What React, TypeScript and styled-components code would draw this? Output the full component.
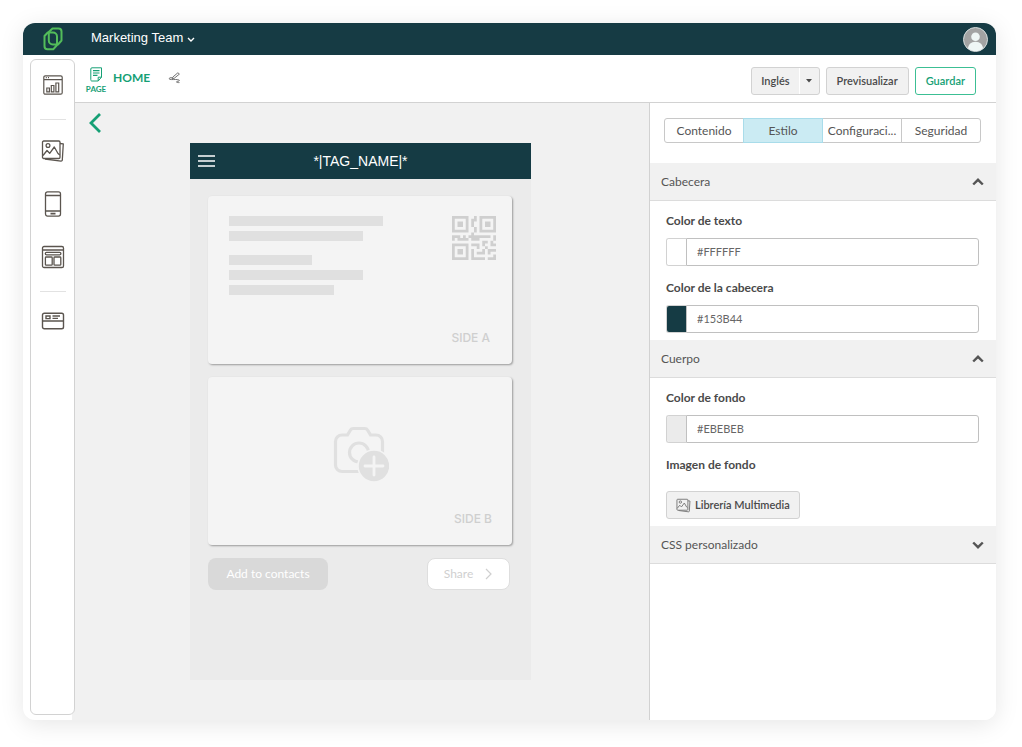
import React, { useState } from "react";
import styled, { createGlobalStyle, css } from "styled-components";

const GlobalStyle = createGlobalStyle`
  *, *::before, *::after { box-sizing: border-box; }
  body {
    margin: 0;
    background: #fff;
    color: #555;
    font-family: Lato, "Open Sans", sans-serif;
    font-size: 12px;
    line-height: 20px;
  }
  button, input { font: inherit; color: inherit; }
  button { cursor: pointer; }
  svg { display: block; flex: none; }
`;

const Page = styled.div`
  min-height: 100vh;
  padding: 23px 26px 27px 23px;
  display: flex;
`;

const Frame = styled.div`
  flex: 1;
  min-width: 0;
  display: flex;
  flex-direction: column;
  border-radius: 12px;
  overflow: hidden;
  background: #fff;
  box-shadow: 0 4px 24px rgba(0, 0, 0, 0.1);
`;

const TopBar = styled.header`
  height: 32px;
  display: flex;
  align-items: center;
  padding: 0 8px 0 20px;
  background: #163b44;
  color: #fff;
`;

const TeamButton = styled.button`
  display: flex;
  align-items: center;
  gap: 4px;
  margin-left: 28px;
  margin-right: auto;
  padding: 0 0 2px;
  border: 0;
  background: none;
  font-family: "Liberation Sans", Arial, sans-serif;
  font-size: 13px;
  svg { margin-top: 3px; }
`;

const PlainButton = styled.button`
  display: flex;
  align-items: center;
  justify-content: center;
  padding: 0;
  border: 0;
  background: none;
`;

const Workspace = styled.div`
  flex: 1;
  display: flex;
`;

const Sidebar = styled.nav`
  position: relative;
  width: 45px;
  margin: 4px -3px 5px 7px;
  padding-top: 11px;
  display: flex;
  flex-direction: column;
  align-items: center;
  border: 1px solid #d2d2d2;
  border-radius: 6px;
  background: #fff;
  color: #5b554f;
`;

const SideButton = styled(PlainButton)`
  width: 28px;
  height: 28px;
  & + & { margin-top: 25px; }
`;

const SideDivider = styled.hr<{ $after: number }>`
  width: 26px;
  height: 1px;
  margin: 20px 0 ${(p) => p.$after}px;
  border: 0;
  background: #e2e2e2;
`;

const Main = styled.div`
  flex: 1;
  min-width: 0;
  display: flex;
  flex-direction: column;
`;

const Toolbar = styled.div`
  height: 48px;
  display: flex;
  align-items: center;
  padding: 4px 20px 0 14px;
  border-bottom: 1px solid #d2d2d2;
`;

const PageBadge = styled.div`
  width: 20px;
  display: flex;
  flex-direction: column;
  align-items: center;
  gap: 3px;
  padding-bottom: 2px;
  color: #16a075;
  font-size: 8px;
  line-height: 8px;
  font-weight: 700;
`;

const TitleGroup = styled.div`
  display: flex;
  align-items: center;
  gap: 18px;
  padding: 0 0 5px 7px;
`;

const PageTitle = styled.h1`
  margin: 0;
  color: #16a075;
  font-size: 12px;
  line-height: 20px;
  font-weight: 700;
`;

const Actions = styled.div`
  margin-left: auto;
  display: flex;
  gap: 6px;
`;

const buttonBox = css`
  height: 28px;
  border: 1px solid #d2d2d2;
  border-radius: 3px;
  background: #f1f1f1;
  color: #4a4a4a;
  font-size: 11px;
  line-height: 20px;
  font-weight: 600;
`;

const ActionButton = styled.button<{ $primary?: boolean }>`
  ${buttonBox}
  padding: 0 10px;
  ${(p) =>
    p.$primary &&
    css`
      border-color: #3cbf94;
      background: #fff;
      color: #16a075;
    `}
`;

const SplitButton = styled.div`
  ${buttonBox}
  display: flex;
  button + button {
    width: 20px;
    border-left: 1px solid #fff;
  }
`;

const SplitPart = styled(PlainButton)`
  padding: 0 9px;
`;

const Columns = styled.div`
  flex: 1;
  display: flex;
`;

const Canvas = styled.main`
  flex: 1;
  display: grid;
  grid-template-columns: 1fr minmax(0, 341px) 1fr;
  align-items: start;
  padding-bottom: 39px;
  background: #f1f1f1;
`;

const BackButton = styled(PlainButton)`
  justify-self: start;
  margin: 9px 0 0 16px;
  color: #16a075;
`;

const Phone = styled.section`
  margin-top: 40px;
  min-height: 537px;
  background: #ebebeb;
`;

const PhoneHeader = styled.div`
  height: 36px;
  display: grid;
  grid-template-columns: 26px 1fr 26px;
  align-items: center;
  padding: 0 8px;
  background: #153b44;
  color: #fff;
  font-family: "Liberation Sans", Arial, sans-serif;
  font-size: 14px;
  text-align: center;
  button { justify-self: start; }
`;

const PhoneBody = styled.div`
  display: flex;
  flex-direction: column;
  gap: 13px;
  padding: 17px 19px 17px 18px;
`;

const Card = styled.article`
  height: 168px;
  display: flex;
  border-radius: 4px;
  background: #f4f4f4;
  box-shadow: 1px 1px 2px rgba(0, 0, 0, 0.35);
`;

const InfoCard = styled(Card)`
  justify-content: space-between;
  padding: 20px 16px 16px 21px;
`;

const Lines = styled.div`
  display: flex;
  flex-direction: column;
  gap: 5px;
`;

const Line = styled.div<{ $width: number; $spaced?: boolean }>`
  width: ${(p) => p.$width}px;
  height: 10px;
  margin-top: ${(p) => (p.$spaced ? 9 : 0)}px;
  background: #e0e0e0;
`;

const CardSide = styled.div`
  display: flex;
  flex-direction: column;
  align-items: flex-end;
  justify-content: space-between;
`;

const SideLabel = styled.span`
  margin-right: 6px;
  color: #cfcfcf;
  font-family: Inter, sans-serif;
  font-size: 12px;
  line-height: 20px;
  font-weight: 500;
`;

const PhotoCard = styled(Card)`
  flex-direction: column;
  align-items: flex-end;
  justify-content: space-between;
  padding: 49px 14px 16px 16px;
`;

const CameraSlot = styled.div`
  align-self: center;
`;

const CardActions = styled.div`
  display: flex;
  justify-content: space-between;
  padding-right: 2px;
`;

const ContactButton = styled.button`
  width: 120px;
  height: 32px;
  padding: 0;
  border: 0;
  border-radius: 8px;
  background: #d9d9d9;
  color: #fff;
`;

const ShareButton = styled.button`
  width: 83px;
  height: 32px;
  display: flex;
  align-items: center;
  justify-content: center;
  gap: 12px;
  padding: 0;
  border: 1px solid #dedede;
  border-radius: 8px;
  background: #fff;
  color: #cfcfcf;
`;

const Panel = styled.aside`
  width: 347px;
  border-left: 1px solid #d2d2d2;
  background: #fff;
`;

const Tabs = styled.div`
  display: flex;
  margin: 15px 15px 20px 14px;
`;

const Tab = styled.button<{ $active: boolean }>`
  flex: 1;
  min-width: 0;
  height: 25px;
  padding: 0;
  border: 1px solid #c8c8c8;
  background: #fff;
  white-space: nowrap;
  & + & { margin-left: -1px; }
  &:first-child { border-radius: 3px 0 0 3px; }
  &:last-child { border-radius: 0 3px 3px 0; }
  ${(p) =>
    p.$active &&
    css`
      z-index: 1;
      border-color: #a9dcea;
      background: #cbebf3;
    `}
`;

const SectionHeader = styled.button`
  width: 100%;
  height: 38px;
  display: flex;
  align-items: center;
  justify-content: space-between;
  padding: 0 12px 0 11px;
  border: 0;
  border-bottom: 1px solid #dcdcdc;
  background: #f1f1f1;
`;

const SectionBody = styled.div`
  display: flex;
  flex-direction: column;
  gap: 12px;
  padding: 10px 17px 7px 16px;
`;

const Field = styled.div`
  display: flex;
  flex-direction: column;
  gap: 7px;
`;

const MediaField = styled(Field)`
  align-items: flex-start;
  gap: 16px;
`;

const FieldLabel = styled.label`
  color: #4a4a4a;
  font-weight: 700;
`;

const ColorRow = styled.div`
  height: 28px;
  display: flex;
`;

const Swatch = styled.input`
  appearance: none;
  width: 20px;
  height: 28px;
  padding: 0;
  border: 1px solid #d2d2d2;
  border-right: 0;
  border-radius: 3px 0 0 3px;
  background: none;
  overflow: hidden;
  &::-webkit-color-swatch-wrapper { padding: 0; }
  &::-webkit-color-swatch { border: 0; border-radius: 0; }
`;

const HexInput = styled.input`
  flex: 1;
  min-width: 0;
  padding: 0 10px;
  border: 1px solid #c0c0c0;
  border-radius: 0 3px 3px 0;
  background: #fff;
  color: #666;
  font-size: 11px;
`;

const MediaButton = styled.button`
  ${buttonBox}
  display: flex;
  align-items: center;
  gap: 4px;
  padding: 0 9px;
  svg { color: #777; }
`;

const Logo = () => (
  <svg width="20" height="24" viewBox="0 0 20 24" fill="none" stroke="#53bd5a" strokeWidth="2" strokeLinejoin="round" aria-label="Logo">
    <path d="M9.500 1.500h6a3 3 0 0 1 3 3v9l-3.500 4H9.800a4 4 0 0 1-4-4V5z" />
    <path d="M4.800 5.500h5.200a4 4 0 0 1 4 4V18l-3.800 4.300H4.500a3 3 0 0 1-3-3V9z" />
  </svg>
);

const Avatar = () => (
  <svg width="25" height="25" viewBox="0 0 25 25" aria-hidden="true">
    <defs>
      <clipPath id="avatar-clip">
        <circle cx="12.500" cy="12.500" r="11.500" />
      </clipPath>
    </defs>
    <circle cx="12.500" cy="12.500" r="12" fill="#a3a3a3" stroke="#d5dcdc" />
    <g fill="#eff6f5" clipPath="url(#avatar-clip)">
      <circle cx="12.500" cy="9.800" r="4.300" />
      <path d="M4.800 23c0-5.500 3.200-8.300 7.700-8.300s7.700 2.800 7.700 8.300v3H4.800z" />
    </g>
  </svg>
);

type ChevronProps = { d: string; width: number; height: number; stroke: number };
const Chevron = ({ d, width, height, stroke }: ChevronProps) => (
  <svg width={width} height={height} viewBox={`0 0 ${width} ${height}`} fill="none" stroke="currentColor" strokeWidth={stroke} aria-hidden="true">
    <path d={d} />
  </svg>
);

const StatsIcon = () => (
  <svg width="20" height="20" viewBox="0 0 20 20" fill="none" stroke="currentColor" strokeWidth="1.2" aria-hidden="true">
    <rect x="0.800" y="0.800" width="18.400" height="18.400" rx="1.500" />
    <path d="M1 4.600h18M2.800 2.700h1M5 2.700h1" />
    <path d="M3.800 13h2.600v3.800H3.800zM8.300 10.500h2.600v6.300H8.300zM12.900 8h2.800v8.800h-2.800z" />
  </svg>
);

const GalleryIcon = ({ size, stroke }: { size: number; stroke: number }) => (
  <svg width={size} height={size} viewBox="0 0 24 24" fill="none" stroke="currentColor" strokeWidth={stroke} strokeLinejoin="round" aria-hidden="true">
    <rect x="1.500" y="2" width="17.500" height="17.500" rx="1.200" />
    <path d="M19 4.500l3.300.3-1 16.200a1.200 1.200 0 0 1-1.300 1.100L4 20" />
    <circle cx="7" cy="6.500" r="1.900" />
    <path d="M2 16.500l4-5 2.700 2.800L13.300 8l3.700 6.500 1.800 1.500" />
  </svg>
);

const PhoneIcon = () => (
  <svg width="18" height="26" viewBox="0 0 18 26" fill="none" stroke="currentColor" strokeWidth="1.300" aria-hidden="true">
    <rect x="1.500" y="0.900" width="15" height="24.200" rx="2" />
    <path d="M1.500 4.500h15M1.500 20h15" />
    <path d="M6.500 22.600h5" strokeWidth="1.600" />
  </svg>
);

const LayoutIcon = () => (
  <svg width="24" height="24" viewBox="0 0 24 24" fill="none" stroke="currentColor" strokeWidth="1.300" aria-hidden="true">
    <rect x="1.500" y="1.500" width="21" height="21" rx="1.600" />
    <path d="M1.500 5h21" />
    <rect x="4.300" y="7.400" width="15.600" height="2.400" rx="1.200" />
    <rect x="4.400" y="12" width="6.800" height="8.200" rx="0.800" />
    <rect x="13" y="12" width="6.800" height="8.200" rx="0.800" />
  </svg>
);

const CardIcon = () => (
  <svg width="24" height="18" viewBox="0 0 24 18" fill="none" stroke="currentColor" strokeWidth="1.400" aria-hidden="true">
    <rect x="1.500" y="1.200" width="21" height="15.600" rx="1.800" />
    <path d="M1.500 9h21M5 4h4v2.600H5zM11.500 4h7.500M11.500 6.400h5.500" />
  </svg>
);

const DocIcon = () => (
  <svg width="13" height="15" viewBox="0 0 13 15" fill="none" stroke="currentColor" strokeWidth="1" aria-hidden="true">
    <path d="M2 .8h9.500v9.400L8.200 14H2c-1 0-1.200-.500-1.200-1.300V2C.8 1.200 1.200.8 2 .8zM11.500 10.200H8.200V14" />
    <path d="M3 3.600h6.500M3 6h6.500M3 8.400h4.500" strokeWidth="1.200" />
  </svg>
);

const RenameIcon = () => (
  <svg width="13" height="12" viewBox="0 0 13 12" fill="none" stroke="#666" strokeWidth="0.900" strokeLinecap="round" strokeLinejoin="round" aria-hidden="true">
    <path d="M10.200 1l1.200 1.100-5.300 4.300-2 .6.700-1.700z" />
    <path d="M4.100 5.800C2.200 5.300 1 6 1.200 6.900c.3 1 3.300.6 6.500.6 2.300 0 3.700.300 3.700 1.100 0 .9-2.700.300-2.900 1.200-.1.700 1.300.900 2.600.8" />
  </svg>
);

const QrIcon = () => (
  <svg width="44" height="44" viewBox="0 0 16 16" fill="#cfcfcf" aria-label="QR">
    <path
      fillRule="evenodd"
      d="M0 0h6v6H0zM1 1v4h4V1zM2 2h2v2H2zM10 0h6v6h-6zM11 1v4h4V1zM12 2h2v2h-2zM0 10h6v6H0zM1 11v4h4v-4zM2 12h2v2H2z"
    />
    <path d="M8 0h1v2H8v2h1v2H8v1H7v-1h1V4H7V1h1zM0 7h3v1h3v1H2V8H1v1H0zM4 7h1v1H4zM7 6h1v1h6v1H10v1H7V8H6V7h1zM15 7h1v2h-1zM7 10h3v2H9v-1H7zM7 12h1v3h4v1H7zM9 13h2v-1h1v2H9zM11 9h2v1h-1v1h-1zM12 11h1v1h-1zM14 9h1v1h1v1h-2zM13 12h3v1h-2v1h-1zM15 14h1v2h-3v-1h2z" />
  </svg>
);

const CameraIcon = () => (
  <svg width="56" height="56" viewBox="0 0 56 56" fill="none" aria-hidden="true">
    <path
      d="M31 45.500H9a6.500 6.500 0 0 1-6.500-6.500V15.500A6.500 6.500 0 0 1 9 9h5.500l2.800-4.800a3.500 3.500 0 0 1 3-1.700h11.400a3.500 3.500 0 0 1 3 1.700L37.500 9H43a6.500 6.500 0 0 1 6.500 6.500V29"
      stroke="#e0e0e0"
      strokeWidth="3.200"
    />
    <circle cx="26" cy="26.500" r="9.500" stroke="#e0e0e0" strokeWidth="3.200" />
    <circle cx="41" cy="40" r="16" fill="#e0e0e0" stroke="#f4f4f4" strokeWidth="1.600" />
    <path d="M41 31v18M32 40h18" stroke="#f4f4f4" strokeWidth="2.800" strokeLinecap="round" />
  </svg>
);

const MenuIcon = () => (
  <svg width="17" height="12" viewBox="0 0 17 12" stroke="#fff" strokeWidth="1.700" aria-hidden="true">
    <path d="M0 1h17M0 6h17M0 11h17" />
  </svg>
);

const CaretIcon = () => (
  <svg width="6" height="4" viewBox="0 0 6 4" fill="currentColor" aria-hidden="true">
    <path d="M0 0h6L3 3.500z" />
  </svg>
);

function ColorField({ id, label, initial }: { id: string; label: string; initial: string }) {
  const [value, setValue] = useState(initial);
  return (
    <Field>
      <FieldLabel htmlFor={id}>{label}</FieldLabel>
      <ColorRow>
        <Swatch type="color" aria-label={label} value={value} onChange={(e) => setValue(e.target.value.toUpperCase())} />
        <HexInput id={id} type="text" value={value} onChange={(e) => setValue(e.target.value)} />
      </ColorRow>
    </Field>
  );
}

function Section({ title, initialOpen = true, children }: { title: string; initialOpen?: boolean; children?: React.ReactNode }) {
  const [open, setOpen] = useState(initialOpen);
  return (
    <section>
      <SectionHeader type="button" aria-expanded={open} onClick={() => setOpen(!open)}>
        {title}
        <Chevron width={12} height={8} stroke={2.4} d={open ? "M1.200 6.500L6 1.800l4.800 4.700" : "M1.200 1.500L6 6.200l4.800-4.700"} />
      </SectionHeader>
      {open && children && <SectionBody>{children}</SectionBody>}
    </section>
  );
}

const TAB_NAMES = ["Contenido", "Estilo", "Configuraci...", "Seguridad"];

export default function App() {
  const [tab, setTab] = useState("Estilo");
  return (
    <>
      <GlobalStyle />
      <Page>
        <Frame>
          <TopBar>
            <Logo />
            <TeamButton type="button">
              Marketing Team
              <Chevron width={8} height={6} stroke={1.4} d="M1 1l3 3 3-3" />
            </TeamButton>
            <PlainButton type="button" aria-label="Cuenta">
              <Avatar />
            </PlainButton>
          </TopBar>
          <Workspace>
            <Sidebar>
              <SideButton type="button" aria-label="Estadísticas"><StatsIcon /></SideButton>
              <SideDivider $after={17} />
              <SideButton type="button" aria-label="Galería"><GalleryIcon size={24} stroke={1.3} /></SideButton>
              <SideButton type="button" aria-label="Móvil"><PhoneIcon /></SideButton>
              <SideButton type="button" aria-label="Diseño"><LayoutIcon /></SideButton>
              <SideDivider $after={15} />
              <SideButton type="button" aria-label="Tarjeta"><CardIcon /></SideButton>
            </Sidebar>
            <Main>
              <Toolbar>
                <PageBadge>
                  <DocIcon />
                  PAGE
                </PageBadge>
                <TitleGroup>
                  <PageTitle>HOME</PageTitle>
                  <PlainButton type="button" aria-label="Renombrar"><RenameIcon /></PlainButton>
                </TitleGroup>
                <Actions>
                  <SplitButton>
                    <SplitPart type="button">Inglés</SplitPart>
                    <PlainButton type="button" aria-label="Elegir idioma"><CaretIcon /></PlainButton>
                  </SplitButton>
                  <ActionButton type="button">Previsualizar</ActionButton>
                  <ActionButton type="button" $primary>Guardar</ActionButton>
                </Actions>
              </Toolbar>
              <Columns>
                <Canvas>
                  <BackButton type="button" aria-label="Volver">
                    <Chevron width={14} height={22} stroke={2.8} d="M12 2L3 11l9 9" />
                  </BackButton>
                  <Phone>
                    <PhoneHeader>
                      <PlainButton type="button" aria-label="Menú"><MenuIcon /></PlainButton>
                      <span>*|TAG_NAME|*</span>
                    </PhoneHeader>
                    <PhoneBody>
                      <InfoCard>
                        <Lines>
                          <Line $width={154} />
                          <Line $width={134} />
                          <Line $width={83} $spaced />
                          <Line $width={134} />
                          <Line $width={105} />
                        </Lines>
                        <CardSide>
                          <QrIcon />
                          <SideLabel>SIDE A</SideLabel>
                        </CardSide>
                      </InfoCard>
                      <PhotoCard>
                        <CameraSlot><CameraIcon /></CameraSlot>
                        <SideLabel>SIDE B</SideLabel>
                      </PhotoCard>
                      <CardActions>
                        <ContactButton type="button">Add to contacts</ContactButton>
                        <ShareButton type="button">
                          Share
                          <Chevron width={8} height={12} stroke={1.2} d="M1 1l5 5-5 5" />
                        </ShareButton>
                      </CardActions>
                    </PhoneBody>
                  </Phone>
                </Canvas>
                <Panel>
                  <Tabs role="tablist">
                    {TAB_NAMES.map((name) => (
                      <Tab key={name} type="button" role="tab" aria-selected={tab === name} $active={tab === name} onClick={() => setTab(name)}>
                        {name}
                      </Tab>
                    ))}
                  </Tabs>
                  <Section title="Cabecera">
                    <ColorField id="text-color" label="Color de texto" initial="#FFFFFF" />
                    <ColorField id="header-color" label="Color de la cabecera" initial="#153B44" />
                  </Section>
                  <Section title="Cuerpo">
                    <ColorField id="body-color" label="Color de fondo" initial="#EBEBEB" />
                    <MediaField>
                      <FieldLabel htmlFor="media-library">Imagen de fondo</FieldLabel>
                      <MediaButton id="media-library" type="button">
                        <GalleryIcon size={15} stroke={1.5} />
                        Librería Multimedia
                      </MediaButton>
                    </MediaField>
                  </Section>
                  <Section title="CSS personalizado" initialOpen={false} />
                </Panel>
              </Columns>
            </Main>
          </Workspace>
        </Frame>
      </Page>
    </>
  );
}
